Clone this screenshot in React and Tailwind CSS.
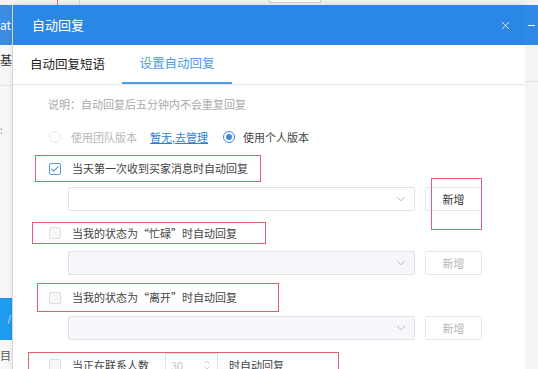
import React from "react";
import { X, ChevronDown, ChevronsUpDown, Check } from "lucide-react";

const font = { fontFamily: '"Noto Sans CJK SC", "Noto Sans", sans-serif' };

function Checkbox({ checked }) {
  return checked ? (
    <span className="flex h-[12px] w-[12px] items-center justify-center rounded-[2px] border border-[#5b9be6] bg-white">
      <Check className="h-[10px] w-[10px] text-[#3f87e0]" strokeWidth={2.5} />
    </span>
  ) : (
    <span className="h-[12px] w-[12px] rounded-[2px] border border-[#dcdcdc] bg-[#f7f7f7]" />
  );
}

function SelectRow({ disabled, mark, mt }) {
  return (
    <div className={`flex ml-[55px] ${mt}`}>
      <div
        className={`flex h-[24px] w-[347px] items-center justify-end rounded-[2px] border border-[#dfe2e8] pr-[6px] ${
          disabled ? "bg-[#f5f7fa]" : "bg-white"
        }`}
      >
        <ChevronDown className="h-[14px] w-[14px] text-[#a8adb6]" strokeWidth={1.5} />
      </div>
      <div className="relative ml-[10px]">
        <button
          className={`flex h-[24px] w-[57px] items-center justify-center rounded-[2px] border border-[#e6e6e6] bg-white text-[11px] ${
            disabled ? "text-[#b5b5b5]" : "text-[#333]"
          }`}
        >
          新增
        </button>
        {mark && (
          <div className="absolute left-[6px] top-[-9px] h-[52px] w-[51px] border border-[#e06070]" />
        )}
      </div>
    </div>
  );
}

function CheckRow({ checked, children, ml, w, h, pl, mt }) {
  return (
    <div
      className={`flex items-center border border-[#e06070] text-[11px] text-[#444] ${ml} ${w} ${h} ${pl} ${mt}`}
    >
      <Checkbox checked={checked} />
      <span className="ml-[11px] whitespace-nowrap">{children}</span>
    </div>
  );
}

export default function App() {
  return (
    <div className="flex h-[369px] w-[538px] flex-col overflow-hidden bg-white" style={font}>
      {/* top strip of page behind */}
      <div className="flex h-[5px] shrink-0 bg-[#f2f2f2]">
        <div className="ml-[57px] h-full w-px bg-[#e07070]" />
        <div className="ml-[21px] h-full w-px bg-[#d8d8d8]" />
        <div className="ml-[189px] h-[3px] w-[52px] border-b border-r border-l border-[#d0d0d0] bg-white" />
      </div>

      <div className="flex flex-1">
        {/* left strip of page behind */}
        <div className="flex w-[13px] shrink-0 flex-col border-r border-[#e2e2e2] bg-[#f7f7f7]">
          <div className="flex h-[40px] items-center bg-[#3a8de0] text-[12px] text-white">at</div>
          <div className="mt-[8px] text-[12px] leading-[14px] text-[#333]">基</div>
          <div className="mt-[18px] h-px bg-[#e4e4e4]" />
          <div className="mt-[38px] text-[10px] leading-[12px] text-[#777]">:</div>
          <div className="mt-[162px] flex h-[42px] items-center justify-end bg-[#1f9cf0] pr-[1px] text-[9px] text-white">/</div>
          <div className="mt-[9px] text-[11px] leading-[12px] text-[#555]">目</div>
        </div>

        {/* modal */}
        <div className="flex w-[512px] shrink-0 flex-col bg-white shadow-[0_0_6px_rgba(0,0,0,0.12)]">
          <div className="flex h-[40px] shrink-0 items-center justify-between bg-[#2b87e6] pl-[19px] pr-[13px]">
            <span className="text-[13px] text-white">自动回复</span>
            <X className="h-[13px] w-[13px] text-white" strokeWidth={1.5} />
          </div>

          <div className="flex h-[40px] shrink-0 border-b border-[#e6e6e6]">
            <div className="flex items-center pl-[17px] text-[12.5px] text-[#222]">自动回复短语</div>
            <div className="ml-[17px] flex w-[110px] items-center justify-center border-b-2 border-[#4a9be8] text-[12.5px] text-[#4a9be8]">
              设置自动回复
            </div>
          </div>

          <div className="flex flex-col">
            <div className="ml-[35px] mt-[12px] h-[14px] text-[11px] leading-[14px] text-[#aaa]">
              说明：自动回复后五分钟内不会重复回复
            </div>

            <div className="ml-[36px] mt-[19px] flex h-[14px] items-center text-[11px]">
              <span className="h-[12px] w-[12px] rounded-full border border-[#e6e6e6]" />
              <span className="ml-[10px] text-[#b8b8b8]">使用团队版本</span>
              <span className="ml-[13px] text-[#2b7fd6] underline">暂无,去管理</span>
              <span className="ml-[15px] flex h-[12px] w-[12px] items-center justify-center rounded-full border border-[#3b8be0]">
                <span className="h-[6px] w-[6px] rounded-full bg-[#3b8be0]" />
              </span>
              <span className="ml-[8px] text-[#444]">使用个人版本</span>
            </div>

            <CheckRow checked ml="ml-[22px]" w="w-[226px]" h="h-[27px]" pl="pl-[13px]" mt="mt-[11px]">
              当天第一次收到买家消息时自动回复
            </CheckRow>
            <SelectRow mark mt="mt-[5px]" />

            <CheckRow ml="ml-[19px]" w="w-[234px]" h="h-[22px]" pl="pl-[16px]" mt="mt-[11px]">
              当我的状态为“忙碌”时自动回复
            </CheckRow>
            <SelectRow disabled mt="mt-[7px]" />

            <CheckRow ml="ml-[24px]" w="w-[242px]" h="h-[29px]" pl="pl-[11px]" mt="mt-[8px]">
              当我的状态为“离开”时自动回复
            </CheckRow>
            <SelectRow disabled mt="mt-[4px]" />

            <div className="ml-[15px] mt-[12px] flex h-[26px] w-[311px] items-center border border-[#e06070] pl-[20px] text-[11px] text-[#444]">
              <Checkbox />
              <span className="ml-[11px] whitespace-nowrap">当正在联系人数</span>
              <div className="ml-[16px] flex h-[24px] w-[53px] items-center justify-between border border-[#e2e2e2] pl-[5px] pr-[4px] text-[#c4c4c4]">
                30
                <ChevronsUpDown className="h-[12px] w-[12px] text-[#b9bec6]" strokeWidth={1.5} />
              </div>
              <span className="ml-[11px] whitespace-nowrap">时自动回复</span>
            </div>
          </div>
        </div>

        {/* right strip of page behind */}
        <div className="flex flex-1 flex-col bg-[#f4f4f4]">
          <div className="flex h-[40px] items-center justify-center bg-[#2f8ae6]">
            <span className="h-px w-[7px] bg-white" />
          </div>
          <div className="mt-[36px] h-px bg-[#e2e2e2]" />
        </div>
      </div>
    </div>
  );
}
